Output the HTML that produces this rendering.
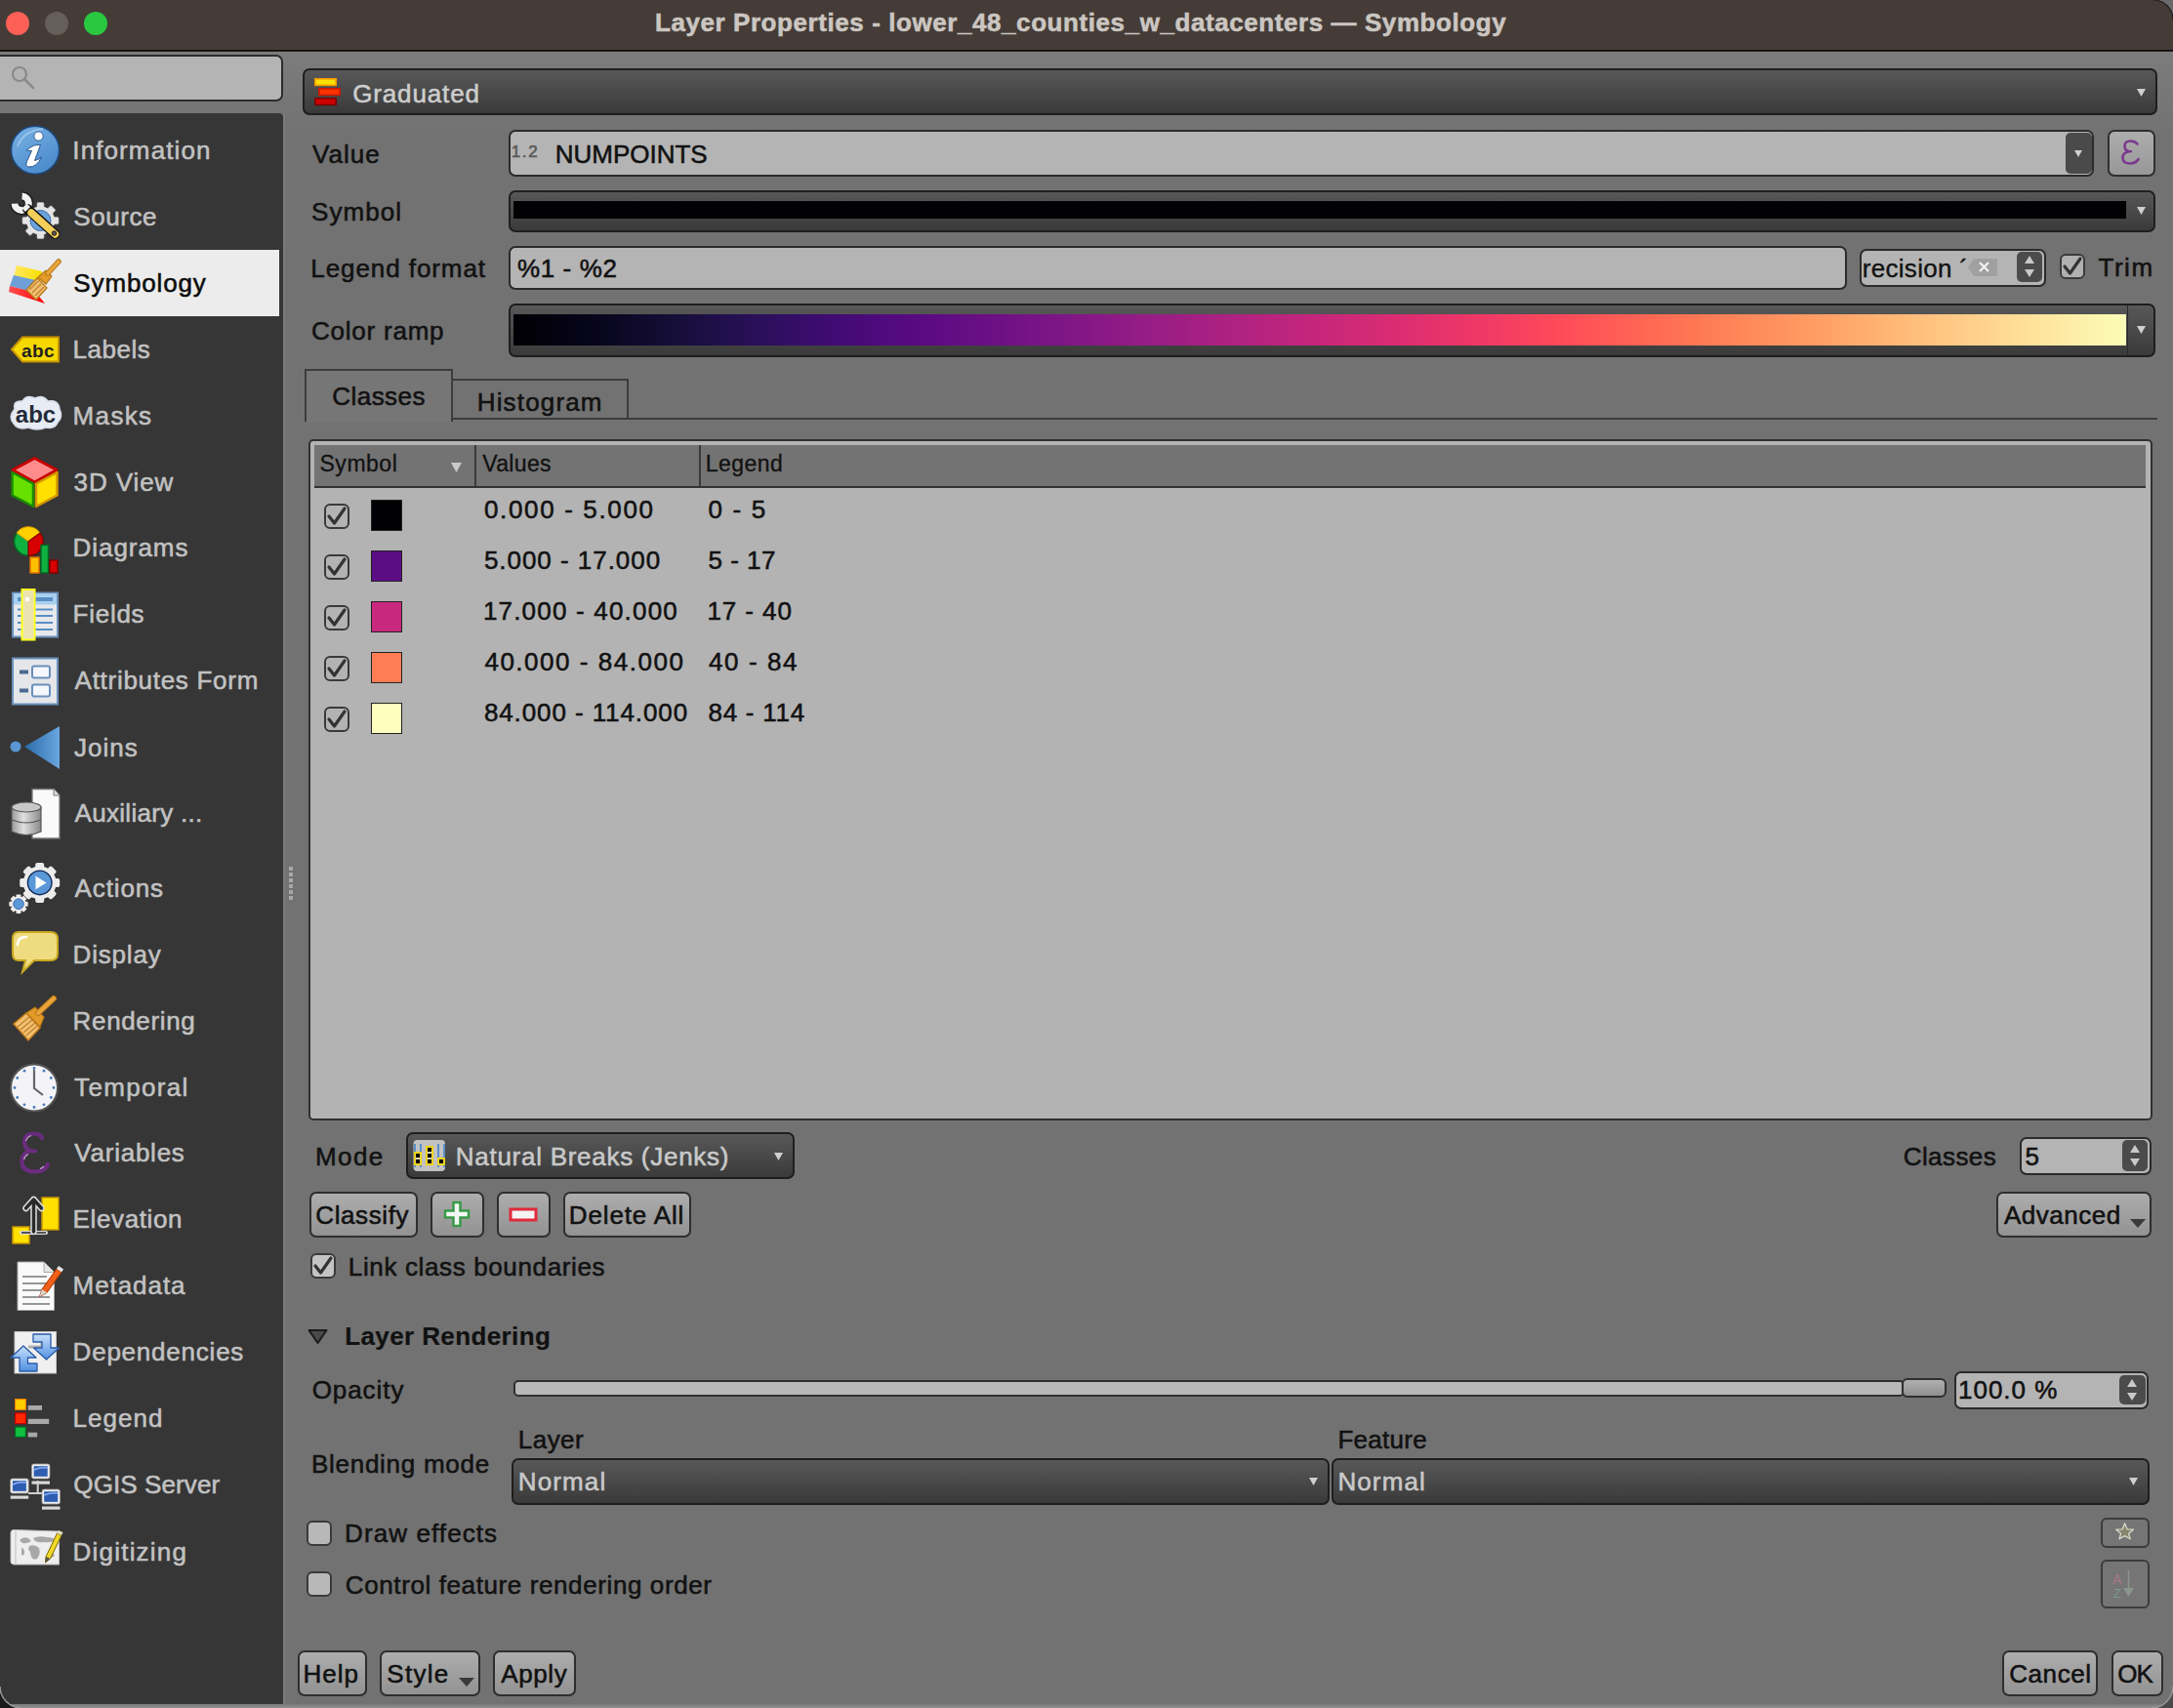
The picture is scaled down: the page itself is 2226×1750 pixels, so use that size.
<!DOCTYPE html><html><head><meta charset="utf-8"><style>
html,body{margin:0;padding:0;width:2226px;height:1750px;overflow:hidden;background:#727272;font-family:"Liberation Sans",sans-serif;}
</style></head><body>
<div style="position:absolute;left:0px;top:52px;width:2226px;height:88px;background:linear-gradient(#7c7c7c,#727272);"></div>
<div style="position:absolute;left:0px;top:1746px;width:2226px;height:4px;background:linear-gradient(#7a7a7a,#909090);"></div>
<div style="position:absolute;left:0px;top:0px;width:2226px;height:51px;background:#453c37;"></div>
<div style="position:absolute;left:0px;top:51px;width:2226px;height:2px;background:linear-gradient(#0c0c0c 50%,#3a3a3a);"></div>
<div style="position:absolute;left:670.95px;top:10px;font-size:26px;line-height:26px;color:#cbc6c1;font-weight:bold;white-space:pre;letter-spacing:0.575px;-webkit-text-stroke:0.55px #cbc6c1;">Layer Properties - lower_48_counties_w_datacenters — Symbology</div>
<div style="position:absolute;left:6px;top:12px;width:24px;height:24px;background:#fe5f57;border-radius:50%;"></div>
<div style="position:absolute;left:46px;top:12px;width:24px;height:24px;background:#665e58;border-radius:50%;"></div>
<div style="position:absolute;left:86px;top:12px;width:24px;height:24px;background:#29c840;border-radius:50%;"></div>
<div style="position:absolute;left:-10px;top:56px;width:300px;height:48px;background:#b4b4b4;border:2px solid #2c2c2c;border-radius:7px;box-sizing:border-box;"></div>
<svg style="position:absolute;left:10px;top:66px;" width="28" height="28" viewBox="0 0 28 28"><circle cx="10" cy="10" r="7" fill="none" stroke="#8a8a8a" stroke-width="2.2"/><line x1="15" y1="15" x2="24" y2="24" stroke="#8a8a8a" stroke-width="2.6" stroke-linecap="round"/></svg>
<div style="position:absolute;left:0px;top:116px;width:290px;height:1630px;background:#363636;border-top-right-radius:4px;"></div>
<div style="position:absolute;left:290px;top:116px;width:2px;height:1630px;background:#7b7b7b;"></div>
<div style="position:absolute;left:0px;top:256px;width:286px;height:68px;background:#ececec;"></div>
<div style="position:absolute;left:74.35px;top:141px;font-size:26px;line-height:26px;color:#c2c2c2;font-weight:normal;white-space:pre;letter-spacing:1.100px;-webkit-text-stroke:0.55px #c2c2c2;">Information</div>
<svg style="position:absolute;left:10px;top:128px;overflow:visible;" width="52" height="52" viewBox="0 0 52 52"><defs><linearGradient id="gi" x1="0" y1="0" x2="0.6" y2="1"><stop offset="0" stop-color="#7ab2e6"/><stop offset="1" stop-color="#4c8ccc"/></linearGradient></defs><circle cx="26" cy="25.7" r="24.5" fill="url(#gi)" stroke="#1d4a80" stroke-width="1.5"/><path d="M8 22 Q14 6 34 4" fill="none" stroke="#a8cdf0" stroke-width="2" opacity="0.7"/><circle cx="29.5" cy="11.5" r="4.6" fill="#fff" stroke="#1d4a80" stroke-width="0.8"/><path d="M17.5 26 Q24 19.5 31.5 20.5 L25.5 36.5 Q29 36 32.5 33 Q28 43 20 43 Q15.5 43 17.5 37.5 L22.5 26.5 Q20 26.8 17.5 26 Z" fill="#fff" stroke="#1d4a80" stroke-width="0.9"/></svg>
<div style="position:absolute;left:75.35px;top:209px;font-size:26px;line-height:26px;color:#c2c2c2;font-weight:normal;white-space:pre;letter-spacing:0.560px;-webkit-text-stroke:0.55px #c2c2c2;">Source</div>
<svg style="position:absolute;left:10px;top:196px;overflow:visible;" width="52" height="52" viewBox="0 0 52 52"><rect x="28" y="11.5" width="7" height="8" rx="1.2" fill="#e4e4e4" stroke="#bdbdbd" stroke-width="0.6" transform="rotate(0 31.5 30)"/><rect x="28" y="11.5" width="7" height="8" rx="1.2" fill="#e4e4e4" stroke="#bdbdbd" stroke-width="0.6" transform="rotate(45 31.5 30)"/><rect x="28" y="11.5" width="7" height="8" rx="1.2" fill="#e4e4e4" stroke="#bdbdbd" stroke-width="0.6" transform="rotate(90 31.5 30)"/><rect x="28" y="11.5" width="7" height="8" rx="1.2" fill="#e4e4e4" stroke="#bdbdbd" stroke-width="0.6" transform="rotate(135 31.5 30)"/><rect x="28" y="11.5" width="7" height="8" rx="1.2" fill="#e4e4e4" stroke="#bdbdbd" stroke-width="0.6" transform="rotate(180 31.5 30)"/><rect x="28" y="11.5" width="7" height="8" rx="1.2" fill="#e4e4e4" stroke="#bdbdbd" stroke-width="0.6" transform="rotate(225 31.5 30)"/><rect x="28" y="11.5" width="7" height="8" rx="1.2" fill="#e4e4e4" stroke="#bdbdbd" stroke-width="0.6" transform="rotate(270 31.5 30)"/><rect x="28" y="11.5" width="7" height="8" rx="1.2" fill="#e4e4e4" stroke="#bdbdbd" stroke-width="0.6" transform="rotate(315 31.5 30)"/><circle cx="31.5" cy="30" r="14.5" fill="#e4e4e4"/><circle cx="31.5" cy="30" r="10.5" fill="#6aa2dc" stroke="#3a6ea8" stroke-width="1"/><path d="M12.6 5 A7.2 7.2 0 1 1 5 12.6" fill="none" stroke="#1a1a1a" stroke-width="9.5"/><path d="M12.6 5 A7.2 7.2 0 1 1 5 12.6" fill="none" stroke="#f2f2f2" stroke-width="7"/><path d="M18 18 L46.5 44" stroke="#111" stroke-width="10" stroke-linecap="round"/><path d="M22 22 L46.5 44" stroke="#f3cf5a" stroke-width="7.5" stroke-linecap="round"/><path d="M15 15 L18.5 18.5" stroke="#f2f2f2" stroke-width="7"/><circle cx="45.5" cy="43" r="2.3" fill="#555" stroke="#111" stroke-width="0.8"/></svg>
<div style="position:absolute;left:75.35px;top:277px;font-size:26px;line-height:26px;color:#0c0c0c;font-weight:normal;white-space:pre;letter-spacing:0.863px;-webkit-text-stroke:0.55px #0c0c0c;">Symbology</div>
<svg style="position:absolute;left:10px;top:264px;overflow:visible;" width="52" height="52" viewBox="0 0 52 52"><defs><linearGradient id="sy1" x1="0" x2="1"><stop offset="0" stop-color="#ffe860"/><stop offset="1" stop-color="#f8e000"/></linearGradient><linearGradient id="sy2" x1="0" x2="1"><stop offset="0" stop-color="#ff5050"/><stop offset="1" stop-color="#ff0000"/></linearGradient></defs><path d="M7 8 L33 14 L31 26 L4 20 Z" fill="url(#sy1)"/><path d="M4 18 L31 24 L26 36 L0 29 Z" fill="#6f9fd8"/><path d="M0 29 L27 36 L36 47 L-1 35 Z" fill="url(#sy2)"/><path d="M17 33 L28 21 L38 31 L27 43 Z" fill="#f0c070" stroke="#b87818" stroke-width="1.3"/><path d="M20 33 L29 24 M23 36 L32 27 M26 39 L35 30" stroke="#c08030" stroke-width="1.2"/><path d="M29 20 L37 13 L43 19 L37 27 Z" fill="#e39a28" stroke="#b87818" stroke-width="1.2"/><path d="M39 16 L50 4" stroke="#b87818" stroke-width="5.5" stroke-linecap="round"/><path d="M39 16 L50 4" stroke="#e8a43a" stroke-width="3.5" stroke-linecap="round"/></svg>
<div style="position:absolute;left:74.60px;top:345px;font-size:26px;line-height:26px;color:#c2c2c2;font-weight:normal;white-space:pre;letter-spacing:0.500px;-webkit-text-stroke:0.55px #c2c2c2;">Labels</div>
<svg style="position:absolute;left:10px;top:332px;overflow:visible;" width="52" height="52" viewBox="0 0 52 52"><path d="M2 26 L13 13.5 L50 13.5 L50 38.5 L13 38.5 Z" fill="#f5d800" stroke="#c89400" stroke-width="2"/><text x="29" y="34" font-family="Liberation Sans" font-weight="bold" font-size="19" fill="#222" text-anchor="middle" letter-spacing="0.5">abc</text></svg>
<div style="position:absolute;left:74.60px;top:413px;font-size:26px;line-height:26px;color:#c2c2c2;font-weight:normal;white-space:pre;letter-spacing:1.350px;-webkit-text-stroke:0.55px #c2c2c2;">Masks</div>
<svg style="position:absolute;left:10px;top:400px;overflow:visible;" width="52" height="52" viewBox="0 0 52 52"><path d="M5 19 Q3 10 13 11 Q17 4 26 8 Q34 4 39 11 Q50 9 51 19 Q55 27 49 33 Q46 40 37 38 Q28 42 19 38 Q8 41 4 34 Q-2 27 5 19 Z" fill="#e8ecf4" stroke="#d4dbe8" stroke-width="1.5"/><text x="26.5" y="32.5" font-family="Liberation Sans" font-weight="bold" font-size="24" fill="#222a38" text-anchor="middle">abc</text></svg>
<div style="position:absolute;left:75.60px;top:481px;font-size:26px;line-height:26px;color:#c2c2c2;font-weight:normal;white-space:pre;letter-spacing:0.892px;-webkit-text-stroke:0.55px #c2c2c2;">3D View</div>
<svg style="position:absolute;left:10px;top:468px;overflow:visible;" width="52" height="52" viewBox="0 0 52 52"><path d="M25.5 1.5 L48 13.5 L25.5 26 L3 13.5 Z" fill="#ff8c8c" stroke="#c80000" stroke-width="3" stroke-linejoin="round"/><path d="M2.5 16 L24 27.5 L24 51 L2.5 39.5 Z" fill="#66e000" stroke="#1a8a00" stroke-width="2.5" stroke-linejoin="round"/><path d="M27 27.5 L48.5 16 L48.5 39.5 L27 51 Z" fill="#ffe000" stroke="#d49600" stroke-width="2.5" stroke-linejoin="round"/></svg>
<div style="position:absolute;left:74.60px;top:548px;font-size:26px;line-height:26px;color:#c2c2c2;font-weight:normal;white-space:pre;letter-spacing:0.936px;-webkit-text-stroke:0.55px #c2c2c2;">Diagrams</div>
<svg style="position:absolute;left:10px;top:535px;overflow:visible;" width="52" height="52" viewBox="0 0 52 52"><circle cx="19" cy="19.8" r="14.5" fill="#10b040" stroke="#006a20" stroke-width="1.5"/><path d="M19 19.8 L7 11 A14.5 14.5 0 0 1 31 11 Z" fill="#ffd000" stroke="#e09000" stroke-width="1"/><path d="M19 19.8 L31 11 A14.5 14.5 0 0 1 19 34.3 Z" fill="#d80000" stroke="#800000" stroke-width="1.2"/><rect x="21" y="36" width="9" height="16" fill="#ffc000" stroke="#e07000" stroke-width="1.5"/><rect x="32" y="23.5" width="7.5" height="28.5" fill="#10b040" stroke="#006a20" stroke-width="1.5"/><rect x="41" y="39" width="8" height="13" fill="#d80000" stroke="#800000" stroke-width="1.5"/></svg>
<div style="position:absolute;left:74.60px;top:616px;font-size:26px;line-height:26px;color:#c2c2c2;font-weight:normal;white-space:pre;letter-spacing:0.730px;-webkit-text-stroke:0.55px #c2c2c2;">Fields</div>
<svg style="position:absolute;left:10px;top:603px;overflow:visible;" width="52" height="52" viewBox="0 0 52 52"><rect x="3" y="4.5" width="46" height="45" fill="#e6e8ec" stroke="#6a90bc" stroke-width="2"/><rect x="4" y="5.5" width="44" height="11" fill="#a8d0f0"/><rect x="8" y="9" width="36" height="4" fill="#5a8ec4"/><path d="M8 21.5 H44 M8 28 H44 M8 35 H44 M8 42 H44" stroke="#5a8ec4" stroke-width="2.2"/><rect x="12.5" y="1" width="13" height="51.5" fill="#ece4b0" stroke="#ffff20" stroke-width="2"/><rect x="16" y="9" width="4" height="4" fill="#fff"/></svg>
<div style="position:absolute;left:76.60px;top:684px;font-size:26px;line-height:26px;color:#c2c2c2;font-weight:normal;white-space:pre;letter-spacing:0.714px;-webkit-text-stroke:0.55px #c2c2c2;">Attributes Form</div>
<svg style="position:absolute;left:10px;top:671px;overflow:visible;" width="52" height="52" viewBox="0 0 52 52"><rect x="3" y="3.5" width="46" height="47" fill="#e4e6ea" stroke="#6a90bc" stroke-width="2"/><rect x="10" y="15.5" width="9" height="4" fill="#4a6a90"/><rect x="10" y="34.5" width="9" height="4" fill="#4a6a90"/><rect x="23" y="11.5" width="18" height="12" rx="2" fill="#f4f8fc" stroke="#6a90bc" stroke-width="2"/><rect x="23" y="30.5" width="18" height="12" rx="2" fill="#f4f8fc" stroke="#6a90bc" stroke-width="2"/></svg>
<div style="position:absolute;left:76.10px;top:753px;font-size:26px;line-height:26px;color:#c2c2c2;font-weight:normal;white-space:pre;letter-spacing:0.988px;-webkit-text-stroke:0.55px #c2c2c2;">Joins</div>
<svg style="position:absolute;left:10px;top:740px;overflow:visible;" width="52" height="52" viewBox="0 0 52 52"><defs><linearGradient id="gj" x1="0" x2="1"><stop offset="0" stop-color="#2a6aa8"/><stop offset="1" stop-color="#6aa6e0"/></linearGradient></defs><circle cx="6" cy="25" r="5.5" fill="#5a96d4"/><path d="M15 25 L51 4 L51 48 Z" fill="url(#gj)"/></svg>
<div style="position:absolute;left:76.60px;top:820px;font-size:26px;line-height:26px;color:#c2c2c2;font-weight:normal;white-space:pre;letter-spacing:0.300px;-webkit-text-stroke:0.55px #c2c2c2;">Auxiliary ...</div>
<svg style="position:absolute;left:10px;top:807px;overflow:visible;" width="52" height="52" viewBox="0 0 52 52"><defs><linearGradient id="ga" x1="0" x2="1"><stop offset="0" stop-color="#9a9a9a"/><stop offset="0.4" stop-color="#e0e0e0"/><stop offset="1" stop-color="#8a8a8a"/></linearGradient></defs><path d="M23 1.5 L45 1.5 L51 8 L51 52 L23 52 Z" fill="#fafafa" stroke="#777" stroke-width="1.3"/><path d="M45 1.5 L45 8 L51 8" fill="#ddd" stroke="#777" stroke-width="1"/><path d="M2 20 L2 45 Q17 52 32 45 L32 20 Z" fill="url(#ga)" stroke="#555" stroke-width="1.2"/><ellipse cx="17" cy="20" rx="15" ry="5" fill="#c8c8c8" stroke="#555" stroke-width="1.2"/><path d="M2 33 Q17 39 32 33" fill="none" stroke="#555" stroke-width="1.2"/></svg>
<div style="position:absolute;left:76.60px;top:897px;font-size:26px;line-height:26px;color:#c2c2c2;font-weight:normal;white-space:pre;letter-spacing:0.875px;-webkit-text-stroke:0.55px #c2c2c2;">Actions</div>
<svg style="position:absolute;left:10px;top:884px;overflow:visible;" width="52" height="52" viewBox="0 0 52 52"><circle cx="30.7" cy="20.4" r="18.5" fill="#222" opacity="0.35"/><rect x="26.2" y="-0.10000000000000142" width="9" height="8" rx="2" fill="#ececec" transform="rotate(0 30.7 20.4)"/><rect x="26.2" y="-0.10000000000000142" width="9" height="8" rx="2" fill="#ececec" transform="rotate(45 30.7 20.4)"/><rect x="26.2" y="-0.10000000000000142" width="9" height="8" rx="2" fill="#ececec" transform="rotate(90 30.7 20.4)"/><rect x="26.2" y="-0.10000000000000142" width="9" height="8" rx="2" fill="#ececec" transform="rotate(135 30.7 20.4)"/><rect x="26.2" y="-0.10000000000000142" width="9" height="8" rx="2" fill="#ececec" transform="rotate(180 30.7 20.4)"/><rect x="26.2" y="-0.10000000000000142" width="9" height="8" rx="2" fill="#ececec" transform="rotate(225 30.7 20.4)"/><rect x="26.2" y="-0.10000000000000142" width="9" height="8" rx="2" fill="#ececec" transform="rotate(270 30.7 20.4)"/><rect x="26.2" y="-0.10000000000000142" width="9" height="8" rx="2" fill="#ececec" transform="rotate(315 30.7 20.4)"/><circle cx="30.7" cy="20.4" r="17" fill="#ececec"/><circle cx="30.7" cy="20.4" r="12.3" fill="#5a98d8" stroke="#0e2a58" stroke-width="1.4"/><path d="M26.5 13.5 L37.5 20.4 L26.5 27.3 Z" fill="#fff"/><rect x="6.5" y="32.5" width="5" height="5" rx="1" fill="#ececec" transform="rotate(0 9 42.2)"/><rect x="6.5" y="32.5" width="5" height="5" rx="1" fill="#ececec" transform="rotate(45 9 42.2)"/><rect x="6.5" y="32.5" width="5" height="5" rx="1" fill="#ececec" transform="rotate(90 9 42.2)"/><rect x="6.5" y="32.5" width="5" height="5" rx="1" fill="#ececec" transform="rotate(135 9 42.2)"/><rect x="6.5" y="32.5" width="5" height="5" rx="1" fill="#ececec" transform="rotate(180 9 42.2)"/><rect x="6.5" y="32.5" width="5" height="5" rx="1" fill="#ececec" transform="rotate(225 9 42.2)"/><rect x="6.5" y="32.5" width="5" height="5" rx="1" fill="#ececec" transform="rotate(270 9 42.2)"/><rect x="6.5" y="32.5" width="5" height="5" rx="1" fill="#ececec" transform="rotate(315 9 42.2)"/><circle cx="9" cy="42.2" r="7.6" fill="#ececec"/><circle cx="9" cy="42.2" r="5.3" fill="#5a98d8" stroke="#2a5a98" stroke-width="0.8"/></svg>
<div style="position:absolute;left:74.60px;top:965px;font-size:26px;line-height:26px;color:#c2c2c2;font-weight:normal;white-space:pre;letter-spacing:0.808px;-webkit-text-stroke:0.55px #c2c2c2;">Display</div>
<svg style="position:absolute;left:10px;top:952px;overflow:visible;" width="52" height="52" viewBox="0 0 52 52"><path d="M9 3 L42 3 Q49 3 49 10 L49 25 Q49 32 42 32 L25 32 L13 44 L16 32 L9 32 Q3 32 3 25 L3 10 Q3 3 9 3 Z" fill="#f0dc80" stroke="#c8a820" stroke-width="2"/><path d="M8 16 Q8 8 17 8" fill="none" stroke="#fff" stroke-width="2.5" stroke-linecap="round"/></svg>
<div style="position:absolute;left:74.60px;top:1033px;font-size:26px;line-height:26px;color:#c2c2c2;font-weight:normal;white-space:pre;letter-spacing:0.656px;-webkit-text-stroke:0.55px #c2c2c2;">Rendering</div>
<svg style="position:absolute;left:10px;top:1020px;overflow:visible;" width="52" height="52" viewBox="0 0 52 52"><path d="M4 29 L17 18 L31 33 L19 46 Z" fill="#f0c070" stroke="#c07818" stroke-width="1.5"/><path d="M8 32 L20 22 M11 35 L23 25 M14 38 L26 28 M17 41 L28 31" stroke="#c08030" stroke-width="1.3"/><path d="M17 18 L26 12 L35 22 L31 32 Z" fill="#e39a28" stroke="#b87818" stroke-width="1.2"/><path d="M29 18 L45 3" stroke="#b87818" stroke-width="6" stroke-linecap="round"/><path d="M29 18 L45 3" stroke="#e8a43a" stroke-width="4" stroke-linecap="round"/></svg>
<div style="position:absolute;left:76.10px;top:1101px;font-size:26px;line-height:26px;color:#c2c2c2;font-weight:normal;white-space:pre;letter-spacing:1.321px;-webkit-text-stroke:0.55px #c2c2c2;">Temporal</div>
<svg style="position:absolute;left:10px;top:1088px;overflow:visible;" width="52" height="52" viewBox="0 0 52 52"><circle cx="25" cy="26.5" r="24" fill="#f4f4f8" stroke="#555" stroke-width="2"/><circle cx="25.0" cy="6.5" r="1.4" fill="#4a7ab8"/><circle cx="35.0" cy="9.2" r="1.4" fill="#4a7ab8"/><circle cx="42.3" cy="16.5" r="1.4" fill="#4a7ab8"/><circle cx="45.0" cy="26.5" r="1.4" fill="#4a7ab8"/><circle cx="42.3" cy="36.5" r="1.4" fill="#4a7ab8"/><circle cx="35.0" cy="43.8" r="1.4" fill="#4a7ab8"/><circle cx="25.0" cy="46.5" r="1.4" fill="#4a7ab8"/><circle cx="15.0" cy="43.8" r="1.4" fill="#4a7ab8"/><circle cx="7.7" cy="36.5" r="1.4" fill="#4a7ab8"/><circle cx="5.0" cy="26.5" r="1.4" fill="#4a7ab8"/><circle cx="7.7" cy="16.5" r="1.4" fill="#4a7ab8"/><circle cx="15.0" cy="9.2" r="1.4" fill="#4a7ab8"/><path d="M25 8 L25 27 L34 34" fill="none" stroke="#666" stroke-width="2.2"/></svg>
<div style="position:absolute;left:76.35px;top:1168px;font-size:26px;line-height:26px;color:#c2c2c2;font-weight:normal;white-space:pre;letter-spacing:0.756px;-webkit-text-stroke:0.55px #c2c2c2;">Variables</div>
<svg style="position:absolute;left:10px;top:1155px;overflow:visible;" width="52" height="52" viewBox="0 0 52 52"><path d="M33 11 Q31 6.5 25 6.5 Q15 6.5 15 15.5 Q15 21.5 21.5 24 Q12.5 26 12.5 35 Q12.5 45.5 25.5 45.5 Q35.5 45.5 39 38" fill="none" stroke="#6a2c7e" stroke-width="4.2" stroke-linecap="round"/><path d="M21.5 24.5 L28 24.5" stroke="#6a2c7e" stroke-width="3.5"/><path d="M16.5 14 Q18 9.5 22 8.5 M14.5 33 Q15.5 29 19 27.5 M35 40 Q33 42 31 42.5" stroke="#c8a0d0" stroke-width="1.2" fill="none"/></svg>
<div style="position:absolute;left:74.60px;top:1236px;font-size:26px;line-height:26px;color:#c2c2c2;font-weight:normal;white-space:pre;letter-spacing:0.619px;-webkit-text-stroke:0.55px #c2c2c2;">Elevation</div>
<svg style="position:absolute;left:10px;top:1223px;overflow:visible;" width="52" height="52" viewBox="0 0 52 52"><rect x="3" y="34" width="17" height="17" fill="#ffe000" stroke="#c89600" stroke-width="1.5"/><rect x="33" y="4" width="17" height="33" fill="#ffe000" stroke="#c89600" stroke-width="1.5"/><path d="M12 40 H37" stroke="#ddd" stroke-width="4" stroke-linecap="round"/><path d="M12 40 H37" stroke="#333" stroke-width="1.6"/><path d="M24.5 39 V6 M16.5 15 L24.5 6 L32.5 15" fill="none" stroke="#e0e0e0" stroke-width="6.5" stroke-linecap="round" stroke-linejoin="round"/><path d="M24.5 39 V6 M16.5 15 L24.5 6 L32.5 15" fill="none" stroke="#2a2a2a" stroke-width="3.5" stroke-linecap="round" stroke-linejoin="round"/></svg>
<div style="position:absolute;left:74.60px;top:1304px;font-size:26px;line-height:26px;color:#c2c2c2;font-weight:normal;white-space:pre;letter-spacing:0.929px;-webkit-text-stroke:0.55px #c2c2c2;">Metadata</div>
<svg style="position:absolute;left:10px;top:1291px;overflow:visible;" width="52" height="52" viewBox="0 0 52 52"><path d="M8 2 L35 2 L45.5 12.5 L45.5 51.5 L8 51.5 Z" fill="#fafafa" stroke="#aaa" stroke-width="1"/><path d="M35 2 L35 12.5 L45.5 12.5" fill="#e4e4e4" stroke="#aaa" stroke-width="1"/><path d="M13 17 H38 M13 24 H38 M13 31 H38 M13 38 H41 M13 45 H41" stroke="#777" stroke-width="1.6"/><path d="M30.5 37.5 L33 30 L48 9 L53 12.5 L38 33.5 Z" fill="#f06018" stroke="#a03000" stroke-width="1"/><path d="M30.5 37.5 L33 30 L38 33.5 Z" fill="#d8d8d0"/><path d="M48 9 L50 6 L55 9.5 L53 12.5 Z" fill="#e8e8e8"/></svg>
<div style="position:absolute;left:74.60px;top:1372px;font-size:26px;line-height:26px;color:#c2c2c2;font-weight:normal;white-space:pre;letter-spacing:0.777px;-webkit-text-stroke:0.55px #c2c2c2;">Dependencies</div>
<svg style="position:absolute;left:10px;top:1359px;overflow:visible;" width="52" height="52" viewBox="0 0 52 52"><defs><linearGradient id="gd" x1="0" y1="0" x2="0" y2="1"><stop offset="0" stop-color="#c8e0fa"/><stop offset="1" stop-color="#5090e0"/></linearGradient></defs><rect x="5" y="5.5" width="42.5" height="42.5" fill="#f0f0f0" stroke="#c8c8c8" stroke-width="1"/><path d="M19 21 L33 21 L33 14" fill="none" stroke="#b0b0b0" stroke-width="3"/><path d="M24 8 L42 8 L42 22 L50.5 22 L37.5 34 L24.5 22 L33 22 L33 16 L24 16 Z" fill="url(#gd)" stroke="#2a5aa8" stroke-width="1.3" stroke-linejoin="round"/><path d="M28 46 L10 46 L10 32 L1 32 L14 20 L27 32 L18.5 32 L18.5 38 L28 38 Z" fill="url(#gd)" stroke="#2a5aa8" stroke-width="1.3" stroke-linejoin="round"/></svg>
<div style="position:absolute;left:74.60px;top:1440px;font-size:26px;line-height:26px;color:#c2c2c2;font-weight:normal;white-space:pre;letter-spacing:1.020px;-webkit-text-stroke:0.55px #c2c2c2;">Legend</div>
<svg style="position:absolute;left:10px;top:1427px;overflow:visible;" width="52" height="52" viewBox="0 0 52 52"><rect x="5.6" y="6.6" width="10.8" height="10.8" fill="#ffd000" stroke="#f08000" stroke-width="1.2"/><rect x="18.7" y="13" width="14.3" height="4.8" fill="#a8a8a8"/><rect x="5.6" y="20.8" width="10.8" height="10.8" fill="#ff2800" stroke="#c00000" stroke-width="1.2"/><rect x="18.7" y="26.8" width="21.5" height="5.2" fill="#a8a8a8"/><rect x="5.6" y="35" width="10.8" height="10.4" fill="#10c040" stroke="#006a20" stroke-width="1.2"/><rect x="18.7" y="40.7" width="9.5" height="4.7" fill="#a8a8a8"/></svg>
<div style="position:absolute;left:75.35px;top:1508px;font-size:26px;line-height:26px;color:#c2c2c2;font-weight:normal;white-space:pre;letter-spacing:0.095px;-webkit-text-stroke:0.55px #c2c2c2;">QGIS Server</div>
<svg style="position:absolute;left:10px;top:1495px;overflow:visible;" width="52" height="52" viewBox="0 0 52 52"><path d="M19 35 H33 M28.7 22 V35" stroke="#d0d0d0" stroke-width="2"/><rect x="22.5" y="5" width="18.5" height="15" rx="2" fill="#eee" stroke="#999" stroke-width="0.8"/><rect x="24.7" y="7.2" width="14" height="10.6" fill="#2e5cb0"/><path d="M24.7 11 Q31.5 8 38.7 9" stroke="#8ab0f0" stroke-width="1.5" fill="none"/><rect x="22.5" y="22.5" width="18.5" height="3.2" fill="#d8d8d8"/><rect x="0.7" y="20" width="18.5" height="15" rx="2" fill="#eee" stroke="#999" stroke-width="0.8"/><rect x="2.9000000000000004" y="22.2" width="14" height="10.6" fill="#2e5cb0"/><path d="M2.9000000000000004 26 Q9.7 23 16.9 24" stroke="#8ab0f0" stroke-width="1.5" fill="none"/><rect x="0.7" y="37.5" width="18.5" height="3.2" fill="#d8d8d8"/><rect x="33" y="31" width="18.5" height="15" rx="2" fill="#eee" stroke="#999" stroke-width="0.8"/><rect x="35.2" y="33.2" width="14" height="10.6" fill="#2e5cb0"/><path d="M35.2 37 Q42 34 49.2 35" stroke="#8ab0f0" stroke-width="1.5" fill="none"/><rect x="33" y="48.5" width="18.5" height="3.2" fill="#d8d8d8"/></svg>
<div style="position:absolute;left:74.60px;top:1577px;font-size:26px;line-height:26px;color:#c2c2c2;font-weight:normal;white-space:pre;letter-spacing:1.206px;-webkit-text-stroke:0.55px #c2c2c2;">Digitizing</div>
<svg style="position:absolute;left:10px;top:1564px;overflow:visible;" width="52" height="52" viewBox="0 0 52 52"><path d="M1 7 Q1 3 5 3.5 L50.5 5 L50.5 39 L5 39 Q0.5 39 1 35 Z" fill="#eeeeee" stroke="#bbb" stroke-width="1"/><path d="M6 4 L6 39" stroke="#d4d4d4" stroke-width="1.8"/><path d="M10 14 Q14 10 19 12 L22 15 Q18 18 13 17 Z M24 12 Q30 9 38 11 Q44 11 47 14 Q42 17 36 16 Q30 17 26 15 Z M20 20 Q26 18 30 22 Q32 28 28 33 Q24 35 22 31 Q21 25 19 23 Z M12 22 Q15 22 15 27 Q14 31 12 29 Z M40 27 Q45 26 46 30 Q43 33 40 31 Z" fill="#a8a8a8"/><path d="M36.5 37 L37 31 L48.5 7 L53 9 L41.5 33 Z" fill="#f0d828" stroke="#7a6800" stroke-width="1"/><path d="M36.5 37 L37 31 L41.5 33 Z" fill="#555"/><path d="M48.5 7 L50 4 L54.5 6 L53 9 Z" fill="#e0e0c0"/></svg>
<svg style="position:absolute;left:0px;top:1728px;" width="22" height="22" viewBox="0 0 22 22"><path d="M0 0 A22 22 0 0 0 22 22 L0 22 Z" fill="#1a1a1a"/><path d="M0 0 A22 22 0 0 0 22 22" fill="none" stroke="#9a9a9a" stroke-width="1.5"/></svg>
<svg style="position:absolute;left:2206px;top:0px;" width="20" height="20" viewBox="0 0 20 20"><path d="M0 0 A20 20 0 0 1 20 20 L20 0 Z" fill="#6a6a6a"/><path d="M0 0 A20 20 0 0 1 20 20" fill="none" stroke="#1a1a1a" stroke-width="1.2"/></svg>
<div style="position:absolute;left:296px;top:888px;width:4px;height:4px;background:#a8a8a8;"></div>
<div style="position:absolute;left:296px;top:894px;width:4px;height:4px;background:#a8a8a8;"></div>
<div style="position:absolute;left:296px;top:900px;width:4px;height:4px;background:#a8a8a8;"></div>
<div style="position:absolute;left:296px;top:906px;width:4px;height:4px;background:#a8a8a8;"></div>
<div style="position:absolute;left:296px;top:912px;width:4px;height:4px;background:#a8a8a8;"></div>
<div style="position:absolute;left:296px;top:918px;width:4px;height:4px;background:#a8a8a8;"></div>
<div style="position:absolute;left:310px;top:70px;width:1900px;height:48px;background:linear-gradient(#585858,#3a3a3a);border:2px solid #1e1e1e;border-radius:7px;box-sizing:border-box;"></div>
<svg style="position:absolute;left:322px;top:80px;" width="28" height="30" viewBox="0 0 28 30"><rect x="0.8" y="0.8" width="21.4" height="6.6" fill="#ffe000" stroke="#f39a00" stroke-width="1.6"/><rect x="4.8" y="10.8" width="21.4" height="6.6" fill="#ff3300" stroke="#c81800" stroke-width="1.6"/><rect x="0.8" y="20.8" width="21.4" height="6.6" fill="#d00000" stroke="#7a0000" stroke-width="1.6"/></svg>
<div style="position:absolute;left:361.15px;top:83px;font-size:26px;line-height:26px;color:#cdcdcd;font-weight:normal;white-space:pre;letter-spacing:0.863px;-webkit-text-stroke:0.55px #cdcdcd;">Graduated</div>
<svg style="position:absolute;left:2188px;top:90px;" width="11" height="10" viewBox="0 0 11 10"><path d="M1 1 L10 1 L5.5 9 Z" fill="#cfcfcf"/></svg>
<div style="position:absolute;left:320.05px;top:145px;font-size:26px;line-height:26px;color:#111;font-weight:normal;white-space:pre;letter-spacing:1.025px;-webkit-text-stroke:0.55px #111;">Value</div>
<div style="position:absolute;left:319.05px;top:204px;font-size:26px;line-height:26px;color:#111;font-weight:normal;white-space:pre;letter-spacing:1.050px;-webkit-text-stroke:0.55px #111;">Symbol</div>
<div style="position:absolute;left:318.30px;top:262px;font-size:26px;line-height:26px;color:#111;font-weight:normal;white-space:pre;letter-spacing:0.925px;-webkit-text-stroke:0.55px #111;">Legend format</div>
<div style="position:absolute;left:319.05px;top:326px;font-size:26px;line-height:26px;color:#111;font-weight:normal;white-space:pre;letter-spacing:0.767px;-webkit-text-stroke:0.55px #111;">Color ramp</div>
<div style="position:absolute;left:521px;top:133px;width:1624px;height:48px;background:#b4b4b4;border:2px solid #2b2b2b;border-radius:7px;box-sizing:border-box;"></div>
<div style="position:absolute;left:523.75px;top:147px;font-size:17px;line-height:17px;color:#5a5a5a;font-weight:normal;white-space:pre;letter-spacing:1.625px;-webkit-text-stroke:0.6px #5a5a5a;">1.2</div>
<div style="position:absolute;left:568.70px;top:145px;font-size:26px;line-height:26px;color:#111;font-weight:normal;white-space:pre;letter-spacing:0.000px;-webkit-text-stroke:0.55px #111;">NUMPOINTS</div>
<div style="position:absolute;left:2116px;top:136px;width:27px;height:42px;background:#4a4a4a;border-radius:5px;"></div>
<svg style="position:absolute;left:2124px;top:153px;" width="10" height="9" viewBox="0 0 10 9"><path d="M1 1 L9 1 L5.0 8 Z" fill="#d0d0d0"/></svg>
<div style="position:absolute;left:2159px;top:133px;width:49px;height:48px;background:linear-gradient(#adadad,#979797);border:2px solid #2f2f2f;border-radius:7px;box-sizing:border-box;"></div>
<svg style="position:absolute;left:2170px;top:142px;" width="24" height="28" viewBox="0 0 24 28"><path d="M19.5 5.5 Q17 2.5 12.5 2.5 Q6.5 2.5 6.5 8 Q6.5 12.5 12 13.2 Q4.5 13.8 4.5 19.5 Q4.5 25.5 12 25.5 Q18 25.5 20.5 21" fill="none" stroke="#7a3a8e" stroke-width="2.6" stroke-linecap="round"/><path d="M12 13.2 L14 13.2" stroke="#7a3a8e" stroke-width="2.2"/></svg>
<div style="position:absolute;left:521px;top:195px;width:1687px;height:43px;background:linear-gradient(#585858,#3a3a3a);border:2px solid #1e1e1e;border-radius:7px;box-sizing:border-box;"></div>
<div style="position:absolute;left:526px;top:206px;width:1652px;height:18px;background:#020205;"></div>
<svg style="position:absolute;left:2188px;top:211px;" width="11" height="10" viewBox="0 0 11 10"><path d="M1 1 L10 1 L5.5 9 Z" fill="#cfcfcf"/></svg>
<div style="position:absolute;left:521px;top:252px;width:1371px;height:45px;background:#b4b4b4;border:2px solid #2b2b2b;border-radius:7px;box-sizing:border-box;"></div>
<div style="position:absolute;left:529.90px;top:262px;font-size:26px;line-height:26px;color:#111;font-weight:normal;white-space:pre;letter-spacing:0.617px;-webkit-text-stroke:0.55px #111;">%1 - %2</div>
<div style="position:absolute;left:1905px;top:255px;width:191px;height:39px;background:#b4b4b4;border:2px solid #2b2b2b;border-radius:7px;box-sizing:border-box;overflow:hidden;"><div style="position:absolute;left:-14px;top:5px;font-size:26px;line-height:26px;color:#111;white-space:pre;-webkit-text-stroke:0.35px #111;letter-spacing:0.3px">precision ´</div></div>
<svg style="position:absolute;left:2016px;top:264px;" width="32" height="20" viewBox="0 0 32 20"><path d="M0 10 L6 1 L30 1 L30 19 L6 19 Z" fill="#a0a0a0"/><path d="M12 5 L21 14 M21 5 L12 14" stroke="#f2f2f2" stroke-width="2.2"/></svg>
<div style="position:absolute;left:2066px;top:258px;width:26px;height:31px;background:#4b4b4b;border-radius:5px;"></div>
<svg style="position:absolute;left:2073px;top:260px;" width="12" height="26" viewBox="0 0 12 26"><path d="M1 10 L11 10 L6 2 Z" fill="#c8c8c8"/><path d="M1 16 L11 16 L6 24 Z" fill="#c8c8c8"/></svg>
<div style="position:absolute;left:2110px;top:260px;width:26px;height:26px;border:2px solid #3a3a3a;border-radius:6px;box-sizing:border-box;background:#b0b0b0;"></div>
<svg style="position:absolute;left:2110px;top:260px;" width="26" height="26" viewBox="0 0 26 26"><path d="M5 13 L10.5 20 L21 5" fill="none" stroke="#333" stroke-width="3.2" stroke-linecap="round" stroke-linejoin="round"/></svg>
<div style="position:absolute;left:2149.50px;top:261px;font-size:26px;line-height:26px;color:#111;font-weight:normal;white-space:pre;letter-spacing:1.517px;-webkit-text-stroke:0.55px #111;">Trim</div>
<div style="position:absolute;left:521px;top:311px;width:1687px;height:55px;background:linear-gradient(#585858,#3a3a3a);border:2px solid #1e1e1e;border-radius:7px;box-sizing:border-box;"></div>
<div style="position:absolute;left:2179px;top:313px;width:27px;height:51px;border-left:1px solid #2a2a2a;"></div>
<div style="position:absolute;left:526px;top:322px;width:1652px;height:32px;background:linear-gradient(90deg,#000004 0%,#07051b 5%,#150e38 10%,#291059 15%,#410b74 20%,#590a81 25%,#6d1085 30%,#831786 35%,#991d85 40%,#b02281 45%,#c7267b 50%,#dc2d72 55%,#f03866 60%,#ff4b59 65%,#ff6553 70%,#ff8156 75%,#ff9962 80%,#ffb473 85%,#ffcd88 90%,#ffe6a0 95%,#fbfdb8 100%);"></div>
<svg style="position:absolute;left:2188px;top:333px;" width="11" height="10" viewBox="0 0 11 10"><path d="M1 1 L10 1 L5.5 9 Z" fill="#cfcfcf"/></svg>
<div style="position:absolute;left:312px;top:378px;width:152px;height:54px;border:2px solid #3c3c3c;border-bottom:none;box-sizing:border-box;background:#767676;"></div>
<div style="position:absolute;left:462px;top:428px;width:1748px;height:2px;background:#3c3c3c;"></div>
<div style="position:absolute;left:462px;top:388px;width:182px;height:42px;border:2px solid #3c3c3c;box-sizing:border-box;"></div>
<div style="position:absolute;left:340.15px;top:393px;font-size:26px;line-height:26px;color:#111;font-weight:normal;white-space:pre;letter-spacing:0.492px;-webkit-text-stroke:0.55px #111;">Classes</div>
<div style="position:absolute;left:488.70px;top:399px;font-size:26px;line-height:26px;color:#111;font-weight:normal;white-space:pre;letter-spacing:1.169px;-webkit-text-stroke:0.55px #111;">Histogram</div>
<div style="position:absolute;left:316px;top:450px;width:1889px;height:698px;background:#b3b3b3;border:2px solid #303030;border-radius:5px;box-sizing:border-box;"></div>
<div style="position:absolute;left:322px;top:456px;width:1876px;height:44px;background:#737373;border-bottom:2px solid #333;box-sizing:border-box;"></div>
<div style="position:absolute;left:486px;top:456px;width:2px;height:42px;background:#3a3a3a;"></div>
<div style="position:absolute;left:716px;top:456px;width:2px;height:42px;background:#3a3a3a;"></div>
<div style="position:absolute;left:327.50px;top:464px;font-size:23px;line-height:23px;color:#111;font-weight:normal;white-space:pre;letter-spacing:0.520px;-webkit-text-stroke:0.3px #111;">Symbol</div>
<div style="position:absolute;left:494.15px;top:464px;font-size:23px;line-height:23px;color:#111;font-weight:normal;white-space:pre;letter-spacing:0.360px;-webkit-text-stroke:0.3px #111;">Values</div>
<div style="position:absolute;left:722.85px;top:464px;font-size:23px;line-height:23px;color:#111;font-weight:normal;white-space:pre;letter-spacing:0.460px;-webkit-text-stroke:0.3px #111;">Legend</div>
<svg style="position:absolute;left:461px;top:473px;" width="13" height="12" viewBox="0 0 13 12"><path d="M1 1 L12 1 L6.5 11 Z" fill="#cacaca"/></svg>
<div style="position:absolute;left:332px;top:516px;width:26px;height:26px;border:2px solid #3a3a3a;border-radius:6px;box-sizing:border-box;background:transparent;"></div>
<svg style="position:absolute;left:332px;top:516px;" width="26" height="26" viewBox="0 0 26 26"><path d="M5 13 L10.5 20 L21 5" fill="none" stroke="#333" stroke-width="3.2" stroke-linecap="round" stroke-linejoin="round"/></svg>
<div style="position:absolute;left:380px;top:512px;width:32px;height:32px;background:#000004;border:1px solid #222;box-sizing:border-box;"></div>
<div style="position:absolute;left:495.90px;top:509px;font-size:26px;line-height:26px;color:#111;font-weight:normal;white-space:pre;letter-spacing:1.662px;-webkit-text-stroke:0.55px #111;">0.000 - 5.000</div>
<div style="position:absolute;left:725.50px;top:509px;font-size:26px;line-height:26px;color:#111;font-weight:normal;white-space:pre;letter-spacing:1.675px;-webkit-text-stroke:0.55px #111;">0 - 5</div>
<div style="position:absolute;left:332px;top:568px;width:26px;height:26px;border:2px solid #3a3a3a;border-radius:6px;box-sizing:border-box;background:transparent;"></div>
<svg style="position:absolute;left:332px;top:568px;" width="26" height="26" viewBox="0 0 26 26"><path d="M5 13 L10.5 20 L21 5" fill="none" stroke="#333" stroke-width="3.2" stroke-linecap="round" stroke-linejoin="round"/></svg>
<div style="position:absolute;left:380px;top:564px;width:32px;height:32px;background:#5b0e84;border:1px solid #222;box-sizing:border-box;"></div>
<div style="position:absolute;left:495.90px;top:561px;font-size:26px;line-height:26px;color:#111;font-weight:normal;white-space:pre;letter-spacing:0.965px;-webkit-text-stroke:0.55px #111;">5.000 - 17.000</div>
<div style="position:absolute;left:725.50px;top:561px;font-size:26px;line-height:26px;color:#111;font-weight:normal;white-space:pre;letter-spacing:0.510px;-webkit-text-stroke:0.55px #111;">5 - 17</div>
<div style="position:absolute;left:332px;top:620px;width:26px;height:26px;border:2px solid #3a3a3a;border-radius:6px;box-sizing:border-box;background:transparent;"></div>
<svg style="position:absolute;left:332px;top:620px;" width="26" height="26" viewBox="0 0 26 26"><path d="M5 13 L10.5 20 L21 5" fill="none" stroke="#333" stroke-width="3.2" stroke-linecap="round" stroke-linejoin="round"/></svg>
<div style="position:absolute;left:380px;top:616px;width:32px;height:32px;background:#c8297f;border:1px solid #222;box-sizing:border-box;"></div>
<div style="position:absolute;left:494.90px;top:613px;font-size:26px;line-height:26px;color:#111;font-weight:normal;white-space:pre;letter-spacing:1.196px;-webkit-text-stroke:0.55px #111;">17.000 - 40.000</div>
<div style="position:absolute;left:724.50px;top:613px;font-size:26px;line-height:26px;color:#111;font-weight:normal;white-space:pre;letter-spacing:0.900px;-webkit-text-stroke:0.55px #111;">17 - 40</div>
<div style="position:absolute;left:332px;top:672px;width:26px;height:26px;border:2px solid #3a3a3a;border-radius:6px;box-sizing:border-box;background:transparent;"></div>
<svg style="position:absolute;left:332px;top:672px;" width="26" height="26" viewBox="0 0 26 26"><path d="M5 13 L10.5 20 L21 5" fill="none" stroke="#333" stroke-width="3.2" stroke-linecap="round" stroke-linejoin="round"/></svg>
<div style="position:absolute;left:380px;top:668px;width:32px;height:32px;background:#fe7d55;border:1px solid #222;box-sizing:border-box;"></div>
<div style="position:absolute;left:496.40px;top:665px;font-size:26px;line-height:26px;color:#111;font-weight:normal;white-space:pre;letter-spacing:1.525px;-webkit-text-stroke:0.55px #111;">40.000 - 84.000</div>
<div style="position:absolute;left:726.00px;top:665px;font-size:26px;line-height:26px;color:#111;font-weight:normal;white-space:pre;letter-spacing:1.592px;-webkit-text-stroke:0.55px #111;">40 - 84</div>
<div style="position:absolute;left:332px;top:724px;width:26px;height:26px;border:2px solid #3a3a3a;border-radius:6px;box-sizing:border-box;background:transparent;"></div>
<svg style="position:absolute;left:332px;top:724px;" width="26" height="26" viewBox="0 0 26 26"><path d="M5 13 L10.5 20 L21 5" fill="none" stroke="#333" stroke-width="3.2" stroke-linecap="round" stroke-linejoin="round"/></svg>
<div style="position:absolute;left:380px;top:720px;width:32px;height:32px;background:#fdfdbe;border:1px solid #222;box-sizing:border-box;"></div>
<div style="position:absolute;left:495.90px;top:717px;font-size:26px;line-height:26px;color:#111;font-weight:normal;white-space:pre;letter-spacing:0.903px;-webkit-text-stroke:0.55px #111;">84.000 - 114.000</div>
<div style="position:absolute;left:725.50px;top:717px;font-size:26px;line-height:26px;color:#111;font-weight:normal;white-space:pre;letter-spacing:0.736px;-webkit-text-stroke:0.55px #111;">84 - 114</div>
<div style="position:absolute;left:323.00px;top:1172px;font-size:26px;line-height:26px;color:#111;font-weight:normal;white-space:pre;letter-spacing:1.417px;-webkit-text-stroke:0.55px #111;">Mode</div>
<div style="position:absolute;left:416px;top:1160px;width:398px;height:48px;background:linear-gradient(#585858,#3a3a3a);border:2px solid #1e1e1e;border-radius:7px;box-sizing:border-box;"></div>
<svg style="position:absolute;left:423px;top:1168px;" width="34" height="32" viewBox="0 0 34 32"><rect x="0.5" y="0" width="32.5" height="32" rx="4" fill="#c2c2c2"/><rect x="1" y="4" width="2" height="24" fill="#5a90c8"/><rect x="7" y="4" width="2" height="24" fill="#5a90c8"/><rect x="25" y="4" width="2" height="24" fill="#5a90c8"/><rect x="31" y="4" width="2" height="24" fill="#5a90c8"/><rect x="1.8" y="12.8" width="6.4" height="12.4" fill="#d8d8b0" stroke="#f2d200" stroke-width="1.6"/><rect x="3" y="20" width="4" height="4" fill="#000"/><rect x="3" y="14" width="4" height="4" fill="#000"/><rect x="13.8" y="6.8" width="6.4" height="18.4" fill="#d8d8b0" stroke="#f2d200" stroke-width="1.6"/><rect x="15" y="20" width="4" height="4" fill="#000"/><rect x="15" y="14" width="4" height="4" fill="#000"/><rect x="15" y="8" width="4" height="4" fill="#000"/><rect x="25.8" y="18.8" width="6.4" height="6.4" fill="#d8d8b0" stroke="#f2d200" stroke-width="1.6"/><rect x="27" y="20" width="4" height="4" fill="#000"/></svg>
<div style="position:absolute;left:466.80px;top:1172px;font-size:26px;line-height:26px;color:#c9c9c9;font-weight:normal;white-space:pre;letter-spacing:0.726px;-webkit-text-stroke:0.55px #c9c9c9;">Natural Breaks (Jenks)</div>
<svg style="position:absolute;left:792px;top:1180px;" width="11" height="10" viewBox="0 0 11 10"><path d="M1 1 L10 1 L5.5 9 Z" fill="#cfcfcf"/></svg>
<div style="position:absolute;left:1949.75px;top:1172px;font-size:26px;line-height:26px;color:#111;font-weight:normal;white-space:pre;letter-spacing:0.408px;-webkit-text-stroke:0.55px #111;">Classes</div>
<div style="position:absolute;left:2069px;top:1165px;width:135px;height:39px;background:#b4b4b4;border:2px solid #2b2b2b;border-radius:7px;box-sizing:border-box;"></div>
<div style="position:absolute;left:2074.40px;top:1172px;font-size:26px;line-height:26px;color:#111;font-weight:normal;white-space:pre;-webkit-text-stroke:0.55px #111;">5</div>
<div style="position:absolute;left:2174px;top:1168px;width:26px;height:32px;background:#4b4b4b;border-radius:5px;"></div>
<svg style="position:absolute;left:2181px;top:1171px;" width="12" height="26" viewBox="0 0 12 26"><path d="M1 10 L11 10 L6 2 Z" fill="#c8c8c8"/><path d="M1 16 L11 16 L6 24 Z" fill="#c8c8c8"/></svg>
<div style="position:absolute;left:317px;top:1221px;width:111px;height:47px;background:linear-gradient(#adadad,#929292);border:2px solid #2e2e2e;border-radius:7px;box-sizing:border-box;"></div>
<div style="position:absolute;left:323.25px;top:1232px;font-size:26px;line-height:26px;color:#111;font-weight:normal;white-space:pre;letter-spacing:0.607px;-webkit-text-stroke:0.55px #111;">Classify</div>
<div style="position:absolute;left:441px;top:1221px;width:55px;height:47px;background:linear-gradient(#adadad,#929292);border:2px solid #2e2e2e;border-radius:7px;box-sizing:border-box;"></div>
<svg style="position:absolute;left:454px;top:1230px;" width="28" height="28" viewBox="0 0 28 28"><path d="M10.5 2 H17.5 V10.5 H26 V17.5 H17.5 V26 H10.5 V17.5 H2 V10.5 H10.5 Z" fill="#f2f8f2" stroke="#3a9a4a" stroke-width="2.5"/></svg>
<div style="position:absolute;left:509px;top:1221px;width:55px;height:47px;background:linear-gradient(#adadad,#929292);border:2px solid #2e2e2e;border-radius:7px;box-sizing:border-box;"></div>
<svg style="position:absolute;left:521px;top:1237px;" width="30" height="16" viewBox="0 0 30 16"><rect x="2" y="2" width="26" height="11" fill="#f4f4f4" stroke="#e02a3a" stroke-width="3"/></svg>
<div style="position:absolute;left:577px;top:1221px;width:131px;height:47px;background:linear-gradient(#adadad,#929292);border:2px solid #2e2e2e;border-radius:7px;box-sizing:border-box;"></div>
<div style="position:absolute;left:582.80px;top:1232px;font-size:26px;line-height:26px;color:#111;font-weight:normal;white-space:pre;letter-spacing:0.856px;-webkit-text-stroke:0.55px #111;">Delete All</div>
<div style="position:absolute;left:2045px;top:1221px;width:159px;height:47px;background:linear-gradient(#adadad,#929292);border:2px solid #2e2e2e;border-radius:7px;box-sizing:border-box;"></div>
<div style="position:absolute;left:2052.90px;top:1232px;font-size:26px;line-height:26px;color:#111;font-weight:normal;white-space:pre;letter-spacing:0.514px;-webkit-text-stroke:0.55px #111;">Advanced</div>
<svg style="position:absolute;left:2181px;top:1248px;" width="18" height="11" viewBox="0 0 18 11"><path d="M1 1 L17 1 L9 10 Z" fill="#3a3a3a"/></svg>
<div style="position:absolute;left:318px;top:1284px;width:26px;height:26px;border:2px solid #3a3a3a;border-radius:6px;box-sizing:border-box;background:#c4c4c4;"></div>
<svg style="position:absolute;left:318px;top:1284px;" width="26" height="26" viewBox="0 0 26 26"><path d="M5 13 L10.5 20 L21 5" fill="none" stroke="#333" stroke-width="3.2" stroke-linecap="round" stroke-linejoin="round"/></svg>
<div style="position:absolute;left:356.80px;top:1285px;font-size:26px;line-height:26px;color:#111;font-weight:normal;white-space:pre;letter-spacing:0.635px;-webkit-text-stroke:0.55px #111;">Link class boundaries</div>
<svg style="position:absolute;left:314px;top:1360px;" width="24" height="20" viewBox="0 0 24 20"><path d="M2.5 3 L20.5 3 L11.5 16 Z" fill="#4a4a4a" stroke="#1a1a1a" stroke-width="2" stroke-linejoin="round"/></svg>
<div style="position:absolute;left:353.25px;top:1356px;font-size:26px;line-height:26px;color:#111;font-weight:bold;white-space:pre;letter-spacing:0.389px;-webkit-text-stroke:0.2px #111;">Layer Rendering</div>
<div style="position:absolute;left:319.65px;top:1411px;font-size:26px;line-height:26px;color:#111;font-weight:normal;white-space:pre;letter-spacing:0.933px;-webkit-text-stroke:0.55px #111;">Opacity</div>
<div style="position:absolute;left:526px;top:1414px;width:1425px;height:17px;background:#b8b8b8;border:2px solid #2f2f2f;border-radius:5px;box-sizing:border-box;"></div>
<div style="position:absolute;left:1948px;top:1412px;width:46px;height:20px;background:linear-gradient(#b0b0b0,#8f8f8f);border:2px solid #2f2f2f;border-radius:6px;box-sizing:border-box;"></div>
<div style="position:absolute;left:2002px;top:1405px;width:199px;height:39px;background:#b4b4b4;border:2px solid #2b2b2b;border-radius:7px;box-sizing:border-box;"></div>
<div style="position:absolute;left:2006.00px;top:1411px;font-size:26px;line-height:26px;color:#111;font-weight:normal;white-space:pre;letter-spacing:0.983px;-webkit-text-stroke:0.55px #111;">100.0 %</div>
<div style="position:absolute;left:2171px;top:1409px;width:27px;height:30px;background:#4b4b4b;border-radius:5px;"></div>
<svg style="position:absolute;left:2178px;top:1411px;" width="12" height="26" viewBox="0 0 12 26"><path d="M1 10 L11 10 L6 2 Z" fill="#c8c8c8"/><path d="M1 16 L11 16 L6 24 Z" fill="#c8c8c8"/></svg>
<div style="position:absolute;left:530.80px;top:1462px;font-size:26px;line-height:26px;color:#111;font-weight:normal;white-space:pre;letter-spacing:0.462px;-webkit-text-stroke:0.55px #111;">Layer</div>
<div style="position:absolute;left:1370.40px;top:1462px;font-size:26px;line-height:26px;color:#111;font-weight:normal;white-space:pre;letter-spacing:0.283px;-webkit-text-stroke:0.55px #111;">Feature</div>
<div style="position:absolute;left:318.90px;top:1487px;font-size:26px;line-height:26px;color:#111;font-weight:normal;white-space:pre;letter-spacing:0.737px;-webkit-text-stroke:0.55px #111;">Blending mode</div>
<div style="position:absolute;left:524px;top:1494px;width:838px;height:48px;background:linear-gradient(#585858,#3a3a3a);border:2px solid #1e1e1e;border-radius:7px;box-sizing:border-box;"></div>
<div style="position:absolute;left:530.80px;top:1505px;font-size:26px;line-height:26px;color:#c9c9c9;font-weight:normal;white-space:pre;letter-spacing:1.120px;-webkit-text-stroke:0.55px #c9c9c9;">Normal</div>
<svg style="position:absolute;left:1340px;top:1513px;" width="11" height="10" viewBox="0 0 11 10"><path d="M1 1 L10 1 L5.5 9 Z" fill="#cfcfcf"/></svg>
<div style="position:absolute;left:1364px;top:1494px;width:838px;height:48px;background:linear-gradient(#585858,#3a3a3a);border:2px solid #1e1e1e;border-radius:7px;box-sizing:border-box;"></div>
<div style="position:absolute;left:1370.40px;top:1505px;font-size:26px;line-height:26px;color:#c9c9c9;font-weight:normal;white-space:pre;letter-spacing:1.120px;-webkit-text-stroke:0.55px #c9c9c9;">Normal</div>
<svg style="position:absolute;left:2180px;top:1513px;" width="11" height="10" viewBox="0 0 11 10"><path d="M1 1 L10 1 L5.5 9 Z" fill="#cfcfcf"/></svg>
<div style="position:absolute;left:314px;top:1558px;width:26px;height:26px;border:2px solid #3a3a3a;border-radius:6px;box-sizing:border-box;background:#b8b8b8;"></div>
<div style="position:absolute;left:353.10px;top:1558px;font-size:26px;line-height:26px;color:#111;font-weight:normal;white-space:pre;letter-spacing:1.091px;-webkit-text-stroke:0.55px #111;">Draw effects</div>
<div style="position:absolute;left:314px;top:1610px;width:26px;height:26px;border:2px solid #3a3a3a;border-radius:6px;box-sizing:border-box;background:#b8b8b8;"></div>
<div style="position:absolute;left:353.85px;top:1611px;font-size:26px;line-height:26px;color:#111;font-weight:normal;white-space:pre;letter-spacing:0.605px;-webkit-text-stroke:0.55px #111;">Control feature rendering order</div>
<div style="position:absolute;left:2152px;top:1555px;width:50px;height:31px;background:#757575;border:2px solid #3b3b3b;border-radius:6px;box-sizing:border-box;"></div>
<svg style="position:absolute;left:2164px;top:1560px;" width="26" height="22" viewBox="0 0 26 22"><g transform="translate(2.2 0) scale(0.8)"><path d="M13 1 L16 8.5 L24 9 L18 14 L20 21 L13 17 L6 21 L8 14 L2 9 L10 8.5 Z" fill="#86866e" stroke="#d8d8cc" stroke-width="1.6" stroke-linejoin="round"/></g></svg>
<div style="position:absolute;left:2152px;top:1598px;width:50px;height:50px;background:#757575;border:2px solid #3b3b3b;border-radius:6px;box-sizing:border-box;"></div>
<svg style="position:absolute;left:2162px;top:1606px;" width="32" height="34" viewBox="0 0 32 34"><text x="2" y="17" font-size="14" fill="#a07a84" font-family="Liberation Sans" stroke="#a07a84" stroke-width="0.3">A</text><text x="3" y="31" font-size="13" fill="#7a9a90" font-family="Liberation Sans">Z</text><path d="M18.5 3 V24" stroke="#8a968c" stroke-width="1.5" fill="none"/><path d="M13 21 L24 21 L18.5 30 Z" fill="#8a968c"/></svg>
<div style="position:absolute;left:305px;top:1691px;width:71px;height:47px;background:linear-gradient(#adadad,#929292);border:2px solid #2e2e2e;border-radius:7px;box-sizing:border-box;"></div>
<div style="position:absolute;left:310.50px;top:1702px;font-size:26px;line-height:26px;color:#111;font-weight:normal;white-space:pre;letter-spacing:1.033px;-webkit-text-stroke:0.55px #111;">Help</div>
<div style="position:absolute;left:389px;top:1691px;width:103px;height:47px;background:linear-gradient(#adadad,#929292);border:2px solid #2e2e2e;border-radius:7px;box-sizing:border-box;"></div>
<div style="position:absolute;left:396.25px;top:1702px;font-size:26px;line-height:26px;color:#111;font-weight:normal;white-space:pre;letter-spacing:1.287px;-webkit-text-stroke:0.55px #111;">Style</div>
<svg style="position:absolute;left:469px;top:1718px;" width="18" height="11" viewBox="0 0 18 11"><path d="M1 1 L17 1 L9 10 Z" fill="#3a3a3a"/></svg>
<div style="position:absolute;left:505px;top:1691px;width:85px;height:47px;background:linear-gradient(#adadad,#929292);border:2px solid #2e2e2e;border-radius:7px;box-sizing:border-box;"></div>
<div style="position:absolute;left:513.20px;top:1702px;font-size:26px;line-height:26px;color:#111;font-weight:normal;white-space:pre;letter-spacing:0.600px;-webkit-text-stroke:0.55px #111;">Apply</div>
<div style="position:absolute;left:2051px;top:1691px;width:98px;height:47px;background:linear-gradient(#adadad,#929292);border:2px solid #2e2e2e;border-radius:7px;box-sizing:border-box;"></div>
<div style="position:absolute;left:2058.15px;top:1702px;font-size:26px;line-height:26px;color:#111;font-weight:normal;white-space:pre;letter-spacing:0.600px;-webkit-text-stroke:0.55px #111;">Cancel</div>
<div style="position:absolute;left:2163px;top:1691px;width:53px;height:47px;background:linear-gradient(#adadad,#929292);border:2px solid #2e2e2e;border-radius:7px;box-sizing:border-box;"></div>
<div style="position:absolute;left:2169.35px;top:1702px;font-size:26px;line-height:26px;color:#111;font-weight:normal;white-space:pre;letter-spacing:-1.000px;-webkit-text-stroke:0.55px #111;">OK</div>
<svg style="position:absolute;left:2204px;top:1728px;" width="22" height="22" viewBox="0 0 22 22"><path d="M22 0 A22 22 0 0 1 0 22 L22 22 Z" fill="#4a4a4a"/><path d="M22 0 A22 22 0 0 1 0 22" fill="none" stroke="#9a9a9a" stroke-width="1.5"/></svg>
</body></html>
